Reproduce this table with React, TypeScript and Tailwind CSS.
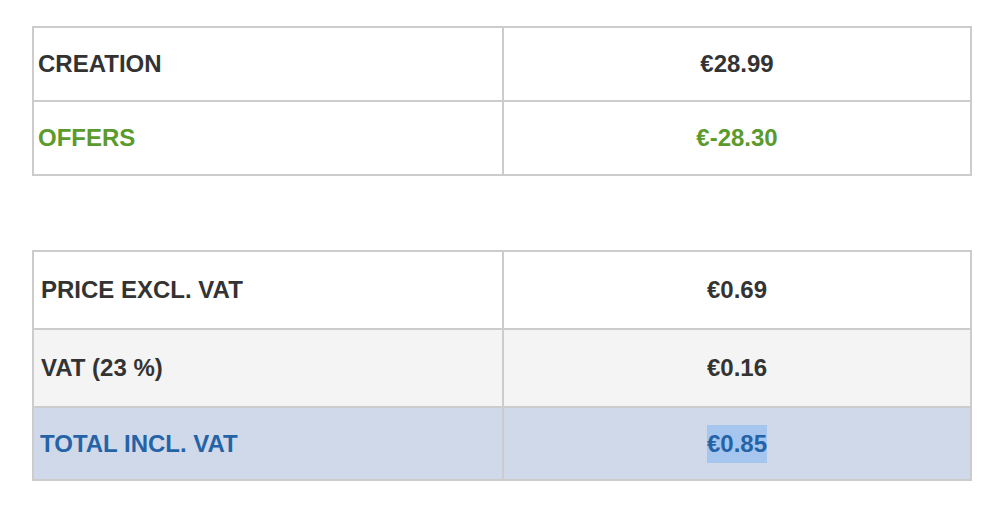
type Row = {
  label: string
  value: string
  tone?: "green" | "blue"
  bg?: string
  h: string
  pad?: string
  selected?: boolean
}

// heights include the 2px top divider (border-box)
const top: Row[] = [
  { label: "CREATION", value: "€28.99", h: "h-[72px]" },
  { label: "OFFERS", value: "€-28.30", tone: "green", h: "h-[74px]" },
]

const totals: Row[] = [
  { label: "PRICE EXCL. VAT", value: "€0.69", h: "h-[76px]" },
  { label: "VAT (23 %)", value: "€0.16", bg: "bg-[#f4f4f4]", h: "h-[78px]" },
  {
    label: "TOTAL INCL. VAT",
    value: "€0.85",
    tone: "blue",
    bg: "bg-[#d0d9e9]",
    h: "h-[73px]",
    pad: "pl-[6px]",
    selected: true,
  },
]

function toneClass(tone?: "green" | "blue") {
  if (tone === "green") return "text-[#5b9a2c]"
  if (tone === "blue") return "text-[#2563a7]"
  return "text-[#333333]"
}

function PriceTable({ rows, pad }: { rows: Row[]; pad: string }) {
  return (
    <div className="w-[940px] border-2 border-[#cccccc]">
      {rows.map((r, i) => (
        <div
          key={r.label}
          className={`flex ${r.h} ${r.bg ?? "bg-white"} ${i > 0 ? "border-t-2 border-[#cccccc]" : ""} ${toneClass(r.tone)}`}
        >
          <div className={`flex w-[470px] items-center border-r-2 border-[#cccccc] ${r.pad ?? pad}`}>
            {r.label}
          </div>
          <div className="flex flex-1 items-center justify-center">
            {r.selected ? (
              <span className="inline-block bg-[#a6c6ef] leading-[38px]">{r.value}</span>
            ) : (
              r.value
            )}
          </div>
        </div>
      ))}
    </div>
  )
}

export default function App() {
  return (
    <div
      className="min-h-[514px] w-[994px] bg-white pl-[32px] pt-[26px] text-[24px] font-bold"
      style={{ fontFamily: '"Liberation Sans", Arial, sans-serif' }}
    >
      <PriceTable rows={top} pad="pl-[4px]" />
      <div className="h-[74px]" />
      <PriceTable rows={totals} pad="pl-[7px]" />
    </div>
  )
}
